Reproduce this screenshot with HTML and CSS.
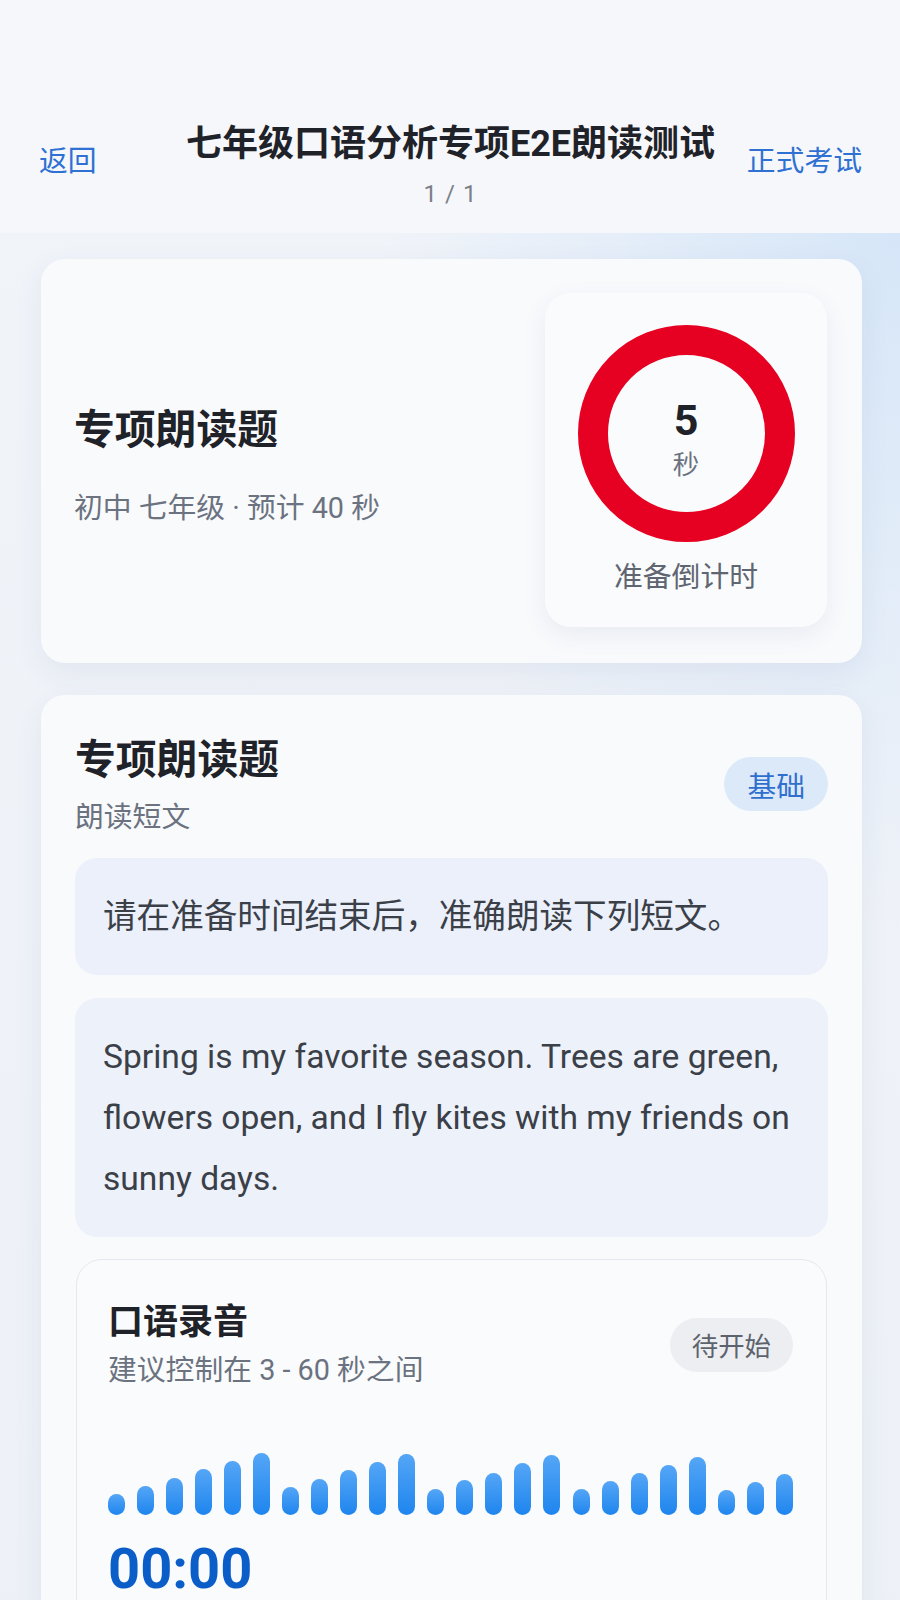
FILE: index.html
```html
<!DOCTYPE html>
<html lang="zh-CN">
<head>
<meta charset="utf-8">
<title>七年级口语分析专项E2E朗读测试</title>
<link rel="stylesheet" href="styles.css">
</head>
<body>
<div class="page">
  <header class="topbar">
    <a class="nav-link nav-left">返回</a>
    <div class="title-block">
      <div class="title">七年级口语分析专项E2E朗读测试</div>
      <div class="progress">1 / 1</div>
    </div>
    <a class="nav-link nav-right">正式考试</a>
  </header>

  <main class="content">
    <section class="card summary">
      <div class="summary-text">
        <div class="card-title">专项朗读题</div>
        <div class="meta">初中 七年级 · 预计 40 秒</div>
      </div>
      <div class="timer-box">
        <div class="ring">
          <div class="ring-num">5</div>
          <div class="ring-unit">秒</div>
        </div>
        <div class="timer-label">准备倒计时</div>
      </div>
    </section>

    <section class="card question">
      <div class="q-head">
        <div>
          <div class="card-title">专项朗读题</div>
          <div class="q-sub">朗读短文</div>
        </div>
        <span class="tag tag-blue">基础</span>
      </div>
      <div class="instruction">请在准备时间结束后，准确朗读下列短文。</div>
      <div class="passage">Spring is my favorite season. Trees are green, flowers open, and I fly kites with my friends on sunny days.</div>

      <div class="recorder">
        <div class="rec-head">
          <div>
            <div class="rec-title">口语录音</div>
            <div class="rec-sub">建议控制在 3 - 60 秒之间</div>
          </div>
          <span class="tag tag-gray">待开始</span>
        </div>
        <div class="wave">
          <span class="bar" style="height:21px"></span>
          <span class="bar" style="height:29px"></span>
          <span class="bar" style="height:37px"></span>
          <span class="bar" style="height:46px"></span>
          <span class="bar" style="height:54px"></span>
          <span class="bar" style="height:62px"></span>
          <span class="bar" style="height:28px"></span>
          <span class="bar" style="height:36px"></span>
          <span class="bar" style="height:45px"></span>
          <span class="bar" style="height:53px"></span>
          <span class="bar" style="height:61px"></span>
          <span class="bar" style="height:26px"></span>
          <span class="bar" style="height:35px"></span>
          <span class="bar" style="height:42px"></span>
          <span class="bar" style="height:52px"></span>
          <span class="bar" style="height:60px"></span>
          <span class="bar" style="height:26px"></span>
          <span class="bar" style="height:34px"></span>
          <span class="bar" style="height:42px"></span>
          <span class="bar" style="height:50px"></span>
          <span class="bar" style="height:58px"></span>
          <span class="bar" style="height:25px"></span>
          <span class="bar" style="height:33px"></span>
          <span class="bar" style="height:41px"></span>
        </div>
        <div class="clock">00:00</div>
      </div>
    </section>
  </main>
</div>
</body>
</html>
```

FILE: styles.css
```css
* { box-sizing: border-box; }

html, body {
  margin: 0;
  padding: 0;
  height: 1600px;
  overflow: hidden;
}

body {
  font-family: "Roboto", "Noto Sans CJK SC", sans-serif;
  color: #1f2329;
  background: #eef2f8;
}

.page {
  min-height: 1600px;
  background:
    radial-gradient(ellipse 520px 700px at 100% 230px, #d6e6f8 0%, rgba(214,230,248,0) 100%),
    linear-gradient(180deg, #f1f4f9 0%, #edf1f7 100%);
}

.topbar {
  display: grid;
  grid-template-columns: 1fr auto 1fr;
  align-items: center;
  padding: 118px 38px 22px 39px;
  height: 233px;
  background: #f6f7fa;
}

.nav-link {
  font-size: 28.8px;
  line-height: 40px;
  color: #2f70d3;
  margin-bottom: 8px;
}

.nav-left { justify-self: start; }
.nav-right { justify-self: end; }

.title-block {
  display: flex;
  flex-direction: column;
  align-items: center;
}

.title {
  font-size: 36px;
  line-height: 50px;
  font-weight: 700;
  color: #1f2329;
}

.progress {
  margin-top: 8px;
  font-size: 24px;
  line-height: 34px;
  color: #7a808a;
  letter-spacing: 1px;
}

.content {
  display: flex;
  flex-direction: column;
  gap: 32px;
  padding: 26px 38px 0 41px;
}

.card {
  background: #f9fafc;
  border-radius: 24px;
  box-shadow: 0 10px 30px rgba(40, 70, 130, 0.07);
}

.summary {
  display: flex;
  align-items: center;
  justify-content: space-between;
  padding: 34px 35px 36px 33px;
}

.summary-text {
  padding-top: 10px;
}

.card-title {
  font-size: 40.8px;
  line-height: 56px;
  font-weight: 700;
  color: #1f2329;
}

.summary-text .card-title {
  margin-bottom: 30px;
}

.meta {
  font-size: 28.8px;
  line-height: 40px;
  color: #6b7280;
}

.timer-box {
  width: 282px;
  height: 334px;
  padding-top: 32px;
  display: flex;
  flex-direction: column;
  align-items: center;
  background: #fafbfc;
  border-radius: 26px;
  box-shadow: 0 8px 24px rgba(40, 70, 130, 0.08);
}

.ring {
  width: 217px;
  height: 217px;
  border-radius: 50%;
  border: 30px solid #e60022;
  padding-top: 16px;
  display: flex;
  flex-direction: column;
  align-items: center;
  justify-content: center;
}

.ring-num {
  font-size: 43px;
  line-height: 48px;
  font-weight: 700;
  color: #1f2329;
  margin-top: -6px;
}

.ring-unit {
  margin-top: 4px;
  font-size: 26.4px;
  line-height: 34px;
  color: #6b7280;
}

.timer-label {
  margin-top: 15px;
  font-size: 28.8px;
  line-height: 40px;
  color: #5f6672;
}

.question {
  padding: 36px 34px 40px 34px;
}

.q-head {
  display: flex;
  align-items: center;
  justify-content: space-between;
}

.q-head .card-title {
  line-height: 58px;
}

.q-sub {
  margin-top: 8px;
  font-size: 28.8px;
  line-height: 40px;
  color: #6b7280;
}

.tag {
  display: inline-flex;
  align-items: center;
  height: 54px;
  border-radius: 27px;
  padding: 0 23px;
  font-size: 28.8px;
}

.tag-blue {
  background: #dce9f8;
  color: #2f6fce;
}

.tag-gray {
  background: #eceef1;
  color: #5d636d;
  font-size: 26.4px;
  padding: 0 22px;
}

.instruction {
  margin-top: 21px;
  padding: 36px 28px;
  background: #ebf0fa;
  border-radius: 22px;
  font-size: 33.6px;
  line-height: 45px;
  color: #3a3f48;
}

.passage {
  margin-top: 23px;
  padding: 28px 28px;
  background: #edf1fa;
  border-radius: 22px;
  font-size: 33.6px;
  line-height: 61px;
  color: #3a3f48;
}

.recorder {
  margin-top: 22px;
  margin-right: 1px;
  margin-left: 1px;
  padding: 39px 33px 30px 31px;
  background: #fafbfc;
  border: 1px solid #e4e8ef;
  border-radius: 26px;
}

.rec-head {
  display: flex;
  align-items: center;
  justify-content: space-between;
}

.rec-title {
  font-size: 35px;
  line-height: 48px;
  font-weight: 700;
  color: #1f2329;
}

.rec-sub {
  margin-top: 3px;
  font-size: 28.8px;
  line-height: 40px;
  color: #6b7280;
}

.wave {
  margin-top: 61px;
  height: 64px;
  display: flex;
  align-items: flex-end;
  justify-content: space-between;
}

.bar {
  width: 17px;
  border-radius: 9px;
  background: linear-gradient(180deg, #55a6f6 0%, #1e85ee 100%);
}

.clock {
  margin-top: 22px;
  font-size: 56px;
  line-height: 64px;
  font-weight: 700;
  color: #0b5ec8;
}
```
